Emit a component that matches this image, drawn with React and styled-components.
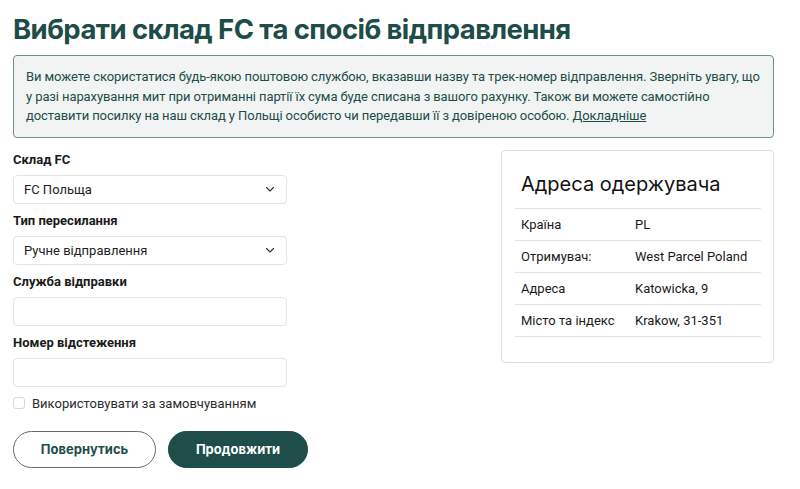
import React from "react"
import styled, { createGlobalStyle } from "styled-components"

const GlobalStyle = createGlobalStyle`
  body {
    margin: 0;
    background: #ffffff;
    font-family: Roboto, "Noto Sans", sans-serif;
    color: #1b1b1b;
  }
`

const Page = styled.div`
  width: 761px;
  padding: 12px 26px 0 13px;
`

const Title = styled.h1`
  margin: 0 0 9px;
  font-family: Inter, sans-serif;
  font-size: 27.5px;
  line-height: 34px;
  font-weight: 700;
  color: #1d4c49;
  letter-spacing: -0.58px;
`

const Notice = styled.div`
  box-sizing: border-box;
  padding: 11px 10px 11px 12px;
  border: 1px solid #6e8f8b;
  border-radius: 4px;
  background: #f1f4f3;
  color: #1d4c49;
  font-size: 13px;
  line-height: 19.5px;
  letter-spacing: -0.1px;
`

const MoreLink = styled.a`
  color: inherit;
  text-decoration: underline;
`

const Columns = styled.div`
  display: flex;
  justify-content: space-between;
  align-items: flex-start;
  margin-top: 14px;
`

const Form = styled.div`
  width: 274px;
  display: flex;
  flex-direction: column;
`

const Label = styled.div`
  font-size: 13px;
  font-weight: 700;
  line-height: 16px;
  margin-bottom: 7px;
`

const Field = styled.div`
  box-sizing: border-box;
  height: 29px;
  border: 1px solid #e3e5e5;
  border-radius: 4px;
  display: flex;
  align-items: center;
  justify-content: space-between;
  padding: 0 10px;
  font-size: 13px;
  color: #222;
  margin-bottom: 9px;
`

const Chevron = () => (
  <svg width="12" height="12" viewBox="0 0 24 24" fill="none" stroke="#333" strokeWidth="2.2" strokeLinecap="round" strokeLinejoin="round">
    <path d="M5 9l7 7 7-7" />
  </svg>
)

const CheckRow = styled.label`
  display: flex;
  align-items: center;
  gap: 7px;
  font-size: 13px;
  color: #2b2b2b;
`

const Box = styled.span`
  box-sizing: border-box;
  width: 12px;
  height: 12px;
  border: 1px solid #d6d8d8;
  border-radius: 3px;
  background: #fff;
`

const Buttons = styled.div`
  display: flex;
  gap: 12px;
  margin-top: 20px;
`

const Button = styled.button`
  box-sizing: border-box;
  flex-shrink: 0;
  height: 37px;
  width: ${(p) => p.$w}px;
  border-radius: 19px;
  font-family: Inter, sans-serif;
  font-size: 13px;
  font-weight: 700;
  cursor: pointer;
  border: 1px solid ${(p) => (p.$primary ? "#1e4d4a" : "#5e6e6c")};
  background: ${(p) => (p.$primary ? "#1e4d4a" : "#ffffff")};
  color: ${(p) => (p.$primary ? "#ffffff" : "#1e4d4a")};
`

const Card = styled.div`
  box-sizing: border-box;
  width: 273px;
  margin-top: -2px;
  border: 1px solid #dcdfdf;
  border-radius: 4px;
  padding: 18px 12px 25px 13px;
`

const CardTitle = styled.h2`
  margin: 0 0 9px 6px;
  font-family: Inter, sans-serif;
  font-size: 20px;
  font-weight: 400;
  line-height: 30px;
  color: #111;
`

const Table = styled.table`
  width: 100%;
  border-collapse: collapse;
  font-size: 13px;
  color: #1a1a1a;
`

const Row = styled.tr`
  border-top: 1px solid #e3e5e5;
  border-bottom: 1px solid #e3e5e5;
`

const Cell = styled.td`
  height: 31px;
  padding: 0 6px;
  width: ${(p) => (p.$first ? "102px" : "auto")};
`

const address = [
  ["Країна", "PL"],
  ["Отримувач:", "West Parcel Poland"],
  ["Адреса", "Katowicka, 9"],
  ["Місто та індекс", "Krakow, 31-351"],
]

export default function App() {
  return (
    <Page>
      <GlobalStyle />
      <Title>Вибрати склад FC та спосіб відправлення</Title>
      <Notice>
        Ви можете скористатися будь-якою поштовою службою, вказавши назву та трек-номер відправлення. Зверніть увагу, що
        у разі нарахування мит при отриманні партії їх сума буде списана з вашого рахунку. Також ви можете самостійно
        доставити посилку на наш склад у Польщі особисто чи передавши її з довіреною особою.{" "}
        <MoreLink href="#">Докладніше</MoreLink>
      </Notice>
      <Columns>
        <Form>
          <Label>Склад FC</Label>
          <Field>
            FC Польща
            <Chevron />
          </Field>
          <Label>Тип пересилання</Label>
          <Field>
            Ручне відправлення
            <Chevron />
          </Field>
          <Label>Служба відправки</Label>
          <Field />
          <Label>Номер відстеження</Label>
          <Field />
          <CheckRow>
            <Box />
            Використовувати за замовчуванням
          </CheckRow>
          <Buttons>
            <Button $w={143}>Повернутись</Button>
            <Button $w={140} $primary>
              Продовжити
            </Button>
          </Buttons>
        </Form>
        <Card>
          <CardTitle>Адреса одержувача</CardTitle>
          <Table>
            <tbody>
              {address.map(([k, v]) => (
                <Row key={k}>
                  <Cell $first>{k}</Cell>
                  <Cell>{v}</Cell>
                </Row>
              ))}
            </tbody>
          </Table>
        </Card>
      </Columns>
    </Page>
  )
}
